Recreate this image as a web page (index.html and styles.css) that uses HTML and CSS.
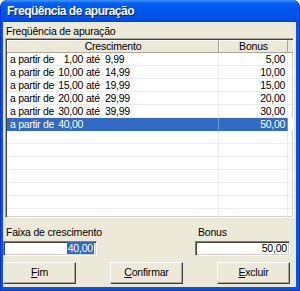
FILE: index.html
```html
<!DOCTYPE html>
<html lang="pt">

<head>
    <meta charset="UTF-8">
    <meta name="viewport" content="width=device-width, initial-scale=1">
    <title>Freqüência de apuração</title>
    <link rel="stylesheet" href="styles.css">
</head>

<body>
    <div class="window">
        <div class="titlebar">Freqüência de apuração</div>

        <div class="client">
            <div class="caption">Freqüência de apuração</div>

            <div class="grid">
                <div class="row head">
                    <div class="cell">Crescimento</div>
                    <div class="cell">Bonus</div>
                    <div class="cell"></div>
                </div>
                <div class="row">
                    <div class="cell"><span class="lead">a partir de</span><span class="n1">1,00</span><span class="ate">até</span><span>9,99</span></div>
                    <div class="cell num">5,00</div>
                    <div class="cell"></div>
                </div>
                <div class="row">
                    <div class="cell"><span class="lead">a partir de</span><span class="n1">10,00</span><span class="ate">até</span><span>14,99</span></div>
                    <div class="cell num">10,00</div>
                    <div class="cell"></div>
                </div>
                <div class="row">
                    <div class="cell"><span class="lead">a partir de</span><span class="n1">15,00</span><span class="ate">até</span><span>19,99</span></div>
                    <div class="cell num">15,00</div>
                    <div class="cell"></div>
                </div>
                <div class="row">
                    <div class="cell"><span class="lead">a partir de</span><span class="n1">20,00</span><span class="ate">até</span><span>29,99</span></div>
                    <div class="cell num">20,00</div>
                    <div class="cell"></div>
                </div>
                <div class="row">
                    <div class="cell"><span class="lead">a partir de</span><span class="n1">30,00</span><span class="ate">até</span><span>39,99</span></div>
                    <div class="cell num">30,00</div>
                    <div class="cell"></div>
                </div>
                <div class="row selected">
                    <div class="cell"><span class="lead">a partir de</span><span class="n1">40,00</span></div>
                    <div class="cell num">50,00</div>
                    <div class="cell"></div>
                </div>
                <div class="row"><div class="cell"></div><div class="cell"></div><div class="cell"></div></div>
                <div class="row"><div class="cell"></div><div class="cell"></div><div class="cell"></div></div>
                <div class="row"><div class="cell"></div><div class="cell"></div><div class="cell"></div></div>
                <div class="row"><div class="cell"></div><div class="cell"></div><div class="cell"></div></div>
                <div class="row"><div class="cell"></div><div class="cell"></div><div class="cell"></div></div>
                <div class="row"><div class="cell"></div><div class="cell"></div><div class="cell"></div></div>
                <div class="row"><div class="cell"></div><div class="cell"></div><div class="cell"></div></div>
            </div>

            <div class="fields">
                <div class="field faixa">
                    <div class="label">Faixa de crescimento</div>
                    <div class="edit"><span class="sel">40,00</span></div>
                </div>
                <div class="field bonus">
                    <div class="label">Bonus</div>
                    <div class="edit">50,00</div>
                </div>
            </div>

            <div class="buttons">
                <div class="btn"><u>F</u>im</div>
                <div class="btn"><u>C</u>onfirmar</div>
                <div class="btn"><u>E</u>xcluir</div>
            </div>
        </div>
    </div>
</body>

</html>
```

FILE: styles.css
```css
body {
    margin: 0;
    padding: 0;
    background: #fff;
    font: 10.5px "Liberation Sans", Arial, sans-serif;
    letter-spacing: -0.2px;
    color: #000;
}

.window {
    width: 300px;
    height: 291px;
    box-sizing: border-box;
    border-radius: 7px 7px 0 0;
    background: #0554e3;
    border: 1px solid #0831d9;
    border-top: none;
    padding: 0 3px 3px 2px;
    display: flex;
    flex-direction: column;
}

.titlebar {
    height: 22px;
    margin: 0 -3px 0 -2px;
    padding-left: 6px;
    border-radius: 7px 7px 0 0;
    background: linear-gradient(#3d95ff 0, #0a62f2 3px, #0058ee 7px, #0055ea 16px, #0047d8 22px);
    color: #fff;
    font: bold 12px "Liberation Sans", Arial, sans-serif;
    letter-spacing: -0.5px;
    line-height: 23px;
    text-shadow: 1px 1px #0a1883;
}

.client {
    flex: 1;
    background: #ece9d8;
    display: flex;
    flex-direction: column;
}

.caption {
    padding: 3px 0 0 3px;
    height: 13px;
    line-height: 13px;
}

.grid {
    margin: 0 2px 0 2px;
    height: 176px;
    overflow: hidden;
    background: #fff;
    border-top: 1px solid #aca899;
    border-left: 1px solid #aca899;
    border-right: 1px solid #fff;
    border-bottom: 1px solid #fff;
    box-shadow: inset 1px 1px 0 #404040, inset -1px -1px 0 #d4d0c8;
    padding: 1px;
}

.row {
    display: grid;
    grid-template-columns: 212px 69px 1fr;
    height: 13px;
    line-height: 12px;
    letter-spacing: -0.3px;
}

.row .cell {
    border-right: 1px solid #ebebeb;
    border-bottom: 1px solid #ebebeb;
    padding: 0 2px 0 3px;
    white-space: nowrap;
    overflow: hidden;
}

.row .cell:last-child {
    border-right: none;
}

.num {
    text-align: right;
}

.head .cell {
    background: #ece9d8;
    text-align: center;
    letter-spacing: -0.2px;
    border-right: 1px solid #aca899;
    border-bottom: 1px solid #aca899;
    box-shadow: inset 1px 1px 0 #fff;
}

.head .cell:last-child {
    border-right: none;
    box-shadow: none;
}

.selected .cell {
    background: #316ac5;
    color: #fff;
    border-right-color: #6f96d6;
    border-bottom-color: #316ac5;
}

.selected .cell:last-child {
    background: #fff;
    border-bottom-color: #ebebeb;
}

.lead {
    display: inline-block;
}

.n1 {
    display: inline-block;
    width: 29px;
    text-align: right;
}

.ate {
    display: inline-block;
    width: 19px;
    margin-left: 3px;
}

.fields {
    display: flex;
    justify-content: space-between;
    margin-top: 8px;
    padding-right: 6px;
}

.label {
    padding-left: 3px;
    height: 13px;
    line-height: 13px;
    white-space: nowrap;
}

.edit {
    margin-top: 2px;
    height: 15px;
    box-sizing: border-box;
    background: #fff;
    border-top: 1px solid #808080;
    border-left: 1px solid #808080;
    border-right: 1px solid #fff;
    border-bottom: 1px solid #fff;
    box-shadow: inset 1px 1px 0 #404040, inset -1px -1px 0 #d4d0c8;
    text-align: right;
    line-height: 13px;
    padding-right: 2px;
}

.faixa {
    width: 94px;
}

.bonus {
    width: 95px;
}

.sel {
    background: #316ac5;
    color: #fff;
    padding: 0 1px;
}

.buttons {
    display: flex;
    justify-content: space-between;
    margin-top: 6px;
    padding-right: 6px;
}

.btn {
    width: 73px;
    height: 22px;
    box-sizing: border-box;
    background: #ece9d8;
    border-top: 1px solid #fff;
    border-left: 1px solid #fff;
    border-right: 1px solid #404040;
    border-bottom: 1px solid #404040;
    box-shadow: inset -1px -1px 0 #aca899;
    text-align: center;
    line-height: 19px;
}
```
